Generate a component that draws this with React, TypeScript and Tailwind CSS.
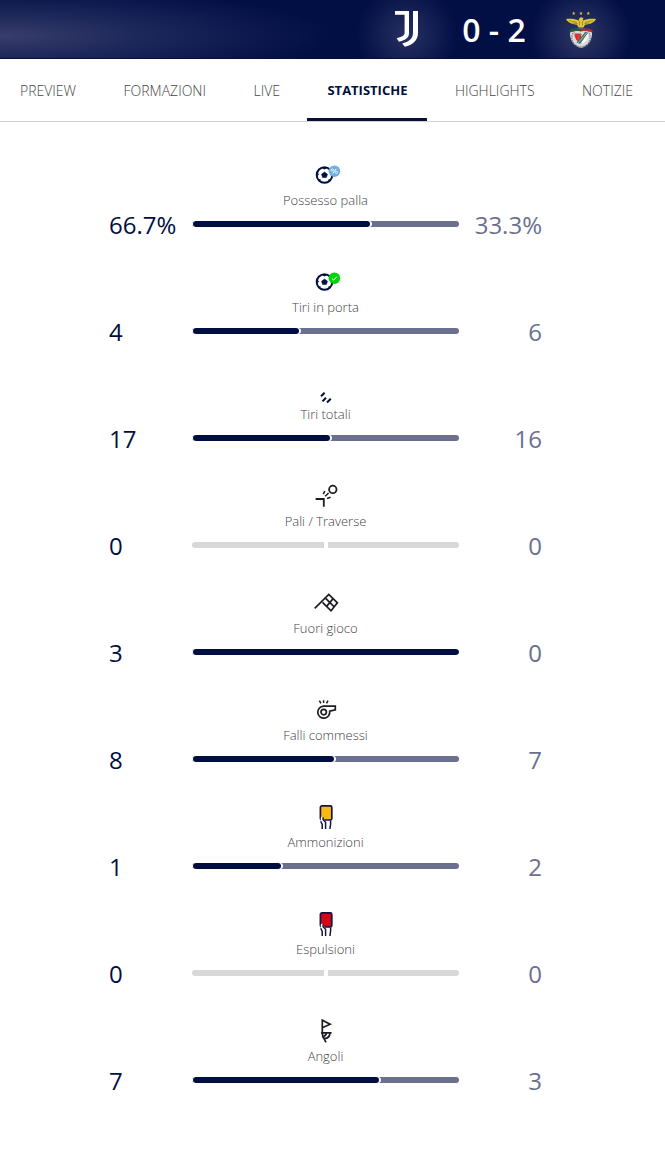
import React from "react";

const NAVY = "#000f40";
const INK = "#1c1c24";

const TABS = [
  { label: "PREVIEW", href: "#preview" },
  { label: "FORMAZIONI", href: "#formazioni" },
  { label: "LIVE", href: "#live" },
  { label: "STATISTICHE", href: "#statistiche", active: true },
  { label: "HIGHLIGHTS", href: "#highlights" },
  { label: "NOTIZIE", href: "#notizie" },
];

function Icon({ children, color = INK }: { children: React.ReactNode; color?: string }) {
  return (
    <svg
      viewBox="0 0 24 24"
      className="h-6 w-6 overflow-visible"
      fill="none"
      stroke={color}
      strokeWidth="1.7"
      aria-hidden="true"
    >
      {children}
    </svg>
  );
}

function Ball() {
  return (
    <>
      <circle cx="10.5" cy="12" r="7.8" strokeWidth="2" />
      <path d="M10.5 9l3 2.200-1.100 3.400H8.600l-1.100-3.400z" fill={NAVY} stroke={NAVY} strokeWidth=".5" />
      <path d="M8.500 4.800l2 1 2-1M3.400 12.500l1.200-1.600M5.800 17.400l.2-1.300M15.200 17.400l-.2-1.300" strokeWidth="1.100" />
    </>
  );
}

function PossessionIcon() {
  return (
    <Icon color={NAVY}>
      <Ball />
      <circle cx="20.4" cy="8.2" r="5.8" fill="#6fb0dc" stroke="none" />
      <path d="M18.700 10.600l3.400-4.800" stroke="#fff" strokeWidth="1" />
      <circle cx="18.300" cy="7" r="1.100" stroke="#fff" strokeWidth="0.8" />
      <circle cx="22.400" cy="9.400" r="1.100" stroke="#fff" strokeWidth="0.8" />
    </Icon>
  );
}

function OnTargetIcon() {
  return (
    <Icon color={NAVY}>
      <Ball />
      <circle cx="20.4" cy="8.2" r="5.8" fill="#00d20a" stroke="none" />
      <path d="M17.8 8.4l1.8 1.7 3.4-3.5" stroke="#fff" strokeWidth="1" />
    </Icon>
  );
}

function ShotsIcon() {
  return (
    <Icon color={NAVY}>
      <path d="M7 19.200l3.600-3.500M8.500 24.400l3.500-3.700M13 25.500l3.800-3.700" strokeWidth="2" />
    </Icon>
  );
}

function PostIcon() {
  return (
    <Icon>
      <circle cx="18.8" cy="5.4" r="3.700" strokeWidth="1.800" />
      <path d="M1.6 15h8.2v7.8" strokeWidth="1.800" />
      <path d="M9.300 10.200l1.500-3.200M11.200 12.300l3.400-3.300M13 14.400l3.600-1.200" strokeWidth="1.600" />
    </Icon>
  );
}

function OffsideIcon() {
  return (
    <Icon>
      <path d="M.7 17.3L14.8 3.4l8.6 8.4-6.4 8L8.500 11.300M11.700 7.300l8.500 8.500M19.100 7.600l-6.500 7.800" />
    </Icon>
  );
}

function WhistleIcon() {
  return (
    <Icon>
      <path d="M9.500 8.200h11.800v3.600l-5.600 1.400a6 6 0 1 1-6.200-5z" />
      <circle cx="9.700" cy="14.100" r="2.700" />
      <path d="M5.400 2.600l1.500 2.800M9.600 2.200v2.900M14 2.600l-1.500 2.800" strokeWidth="1.500" />
    </Icon>
  );
}

function CardIcon({ fill }: { fill: string }) {
  return (
    <Icon color="#14143c">
      <rect x="6.400" y="0.8" width="11.400" height="14.200" rx="1.600" fill={fill} />
      <path d="M8.200 24v-4.500l-1.400-3v-3.500c.2-1.600 1.900-1.600 2.300-.2l2.400 3.700V24z" fill="#fff" stroke="none" />
      <path d="M8.200 24v-4.500l-1.500-3.200M9.100 12.200v2.600l2.500 2.400V24M16.600 15.500V19l-.7 5" strokeWidth="1.500" />
    </Icon>
  );
}

function CornerIcon() {
  return (
    <Icon>
      <path d="M8.300 14V1.200l7.800 4-7.800 3.600M7 13.900h10.600M8.300 13.900c0 2.400.6 4.400 1.800 6M16 13.900c-.2 3.200-2.300 5.500-5.600 5.700M9.700 18.500l2.200 4.900M12.300 13.900c0 1.600-.9 2.700-2.500 3.200" />
    </Icon>
  );
}

type Stat = { label: string; home: number; away: number; unit?: string; icon: React.ReactNode };

const STATS: Stat[] = [
  { label: "Possesso palla", home: 66.7, away: 33.3, unit: "%", icon: <PossessionIcon /> },
  { label: "Tiri in porta", home: 4, away: 6, icon: <OnTargetIcon /> },
  { label: "Tiri totali", home: 17, away: 16, icon: <ShotsIcon /> },
  { label: "Pali / Traverse", home: 0, away: 0, icon: <PostIcon /> },
  { label: "Fuori gioco", home: 3, away: 0, icon: <OffsideIcon /> },
  { label: "Falli commessi", home: 8, away: 7, icon: <WhistleIcon /> },
  { label: "Ammonizioni", home: 1, away: 2, icon: <CardIcon fill="#fcb813" /> },
  { label: "Espulsioni", home: 0, away: 0, icon: <CardIcon fill="#dc0014" /> },
  { label: "Angoli", home: 7, away: 3, icon: <CornerIcon /> },
];

function JuventusLogo() {
  return (
    <svg viewBox="0 0 24 36" className="h-9 w-6" fill="#fff" role="img" aria-label="Juventus">
      <path d="M0 0h14v22.5c0 4.2-4.400 7-10 8.300L1.600 27.300c4.600-1 8-2.600 8-5.200V3.800H0z" />
      <path d="M18 0h5v22c0 7.600-5.600 12-13.200 13.800l-2.600-3.400C13.600 31 18 27.600 18 22z" />
    </svg>
  );
}

function BenficaLogo() {
  return (
    <svg viewBox="0 0 32 38" className="h-[38px] w-8" role="img" aria-label="Benfica">
      <g fill="#dfc93a">
        <path d="M8.700 .6l.5 1.100 1.200.1-.9.8.3 1.200-1.100-.6-1.100.6.3-1.200-.9-.8 1.200-.1z" />
        <path d="M16 .6l.5 1.100 1.200.1-.9.8.3 1.200-1.100-.6-1.100.6.3-1.200-.9-.8 1.200-.1z" />
        <path d="M23.300 .6l.5 1.100 1.200.1-.9.8.3 1.200-1.100-.6-1.100.6.3-1.200-.9-.8 1.200-.1z" />
        <path d="M1 8c5-.6 9.500 0 12.600 1.600C14 7.200 15 6 16.700 6.200l2 1.300-.9.700.3 1.400C21.500 8 26 7.400 31 8c-1 2.600-3.800 4.400-8 5.200l-3 .6-1.500 2.700h-5L12 13.800l-3-.6C5 12.400 2 10.600 1 8z" />
      </g>
      <path d="M4 9.500l8 2M28 9.500l-8 2M7.500 12l5 .6M24.500 12l-5 .6M14.500 10v4.500M17.500 10v4.500" stroke="#8c7420" strokeWidth=".7" />
      <path d="M5 20.500c-.6 8.500 3.600 14 11 16.500 7.400-2.500 11.600-8 11-16.500l-11-2z" fill="#d9dadd" />
      <circle cx="16" cy="26.700" r="9.200" fill="none" stroke="#7e828e" strokeWidth="1.600" strokeDasharray="1.200 1.100" />
      <path d="M9.500 22.500H16v9.500c-4.500-1.500-6.500-5-6.500-9.500z" fill="#e52b2c" />
      <path d="M17 22.500h6.500c0 4.500-2 8-6.500 10z" fill="#fff" />
      <path d="M11.500 31.500l9-11 2.500 1.500-8 11z" fill="#326f8e" />
      <path d="M13 32l9-10.500" stroke="#d8cb58" strokeWidth=".8" />
      <circle cx="16" cy="26.500" r="2.800" fill="none" stroke="#8f7c45" strokeWidth=".8" />
      <path d="M4 20c2-2.600 5.500-3 12-2v2.400c-4.500-.8-8-.4-11 1.200z" fill="#1d5c40" />
      <path d="M28 20c-2-2.600-5.500-3-12-2v2.400c4.500-.8 8-.4 11 1.200z" fill="#a82e38" />
    </svg>
  );
}

function StatBar({ home, away }: { home: number; away: number }) {
  const total = home + away;

  if (total === 0) {
    return (
      <div className="flex h-1.5 gap-1">
        <div className="flex-1 rounded-l-full bg-[#d8d8d8]" />
        <div className="flex-1 rounded-r-full bg-[#d8d8d8]" />
      </div>
    );
  }

  return (
    <div className="h-1.5 overflow-hidden rounded-full bg-[#6b708f]">
      <div
        className="box-content h-full rounded-r-full bg-white pr-0.5"
        style={{ width: `${(home / total) * 100}%` }}
      >
        <div className="ml-px h-full rounded-full bg-[#000f40]" />
      </div>
    </div>
  );
}

function StatRow({ label, home, away, unit = "", icon }: Stat) {
  return (
    <li className="grid grid-cols-[83px_1fr_83px] items-end">
      <span className="text-2xl leading-8 text-[#000f40]">{home}{unit}</span>
      <div className="pb-[14px]">
        <div className="flex justify-center">{icon}</div>
        <p className="mt-[5px] mb-[13px] text-center text-[13px] leading-4 font-light text-[#444]">{label}</p>
        <StatBar home={home} away={away} />
      </div>
      <span className="text-right text-2xl leading-8 text-[#6b708f]">{away}{unit}</span>
    </li>
  );
}

export default function App() {
  return (
    <div className="min-h-screen bg-white font-['Open_Sans',sans-serif]">
      {/* Scoreboard */}
      <header className="flex h-[59px] justify-end border-b border-[#0a1035] bg-[#020f45] bg-[radial-gradient(ellipse_330px_50px_at_0px_36px,#393e6b_0%,#1b2659_45%,transparent_100%)] pr-8">
        <div className="flex">
          <div className="flex w-[104px] justify-center bg-[radial-gradient(circle_at_50%_60%,#273061_0%,transparent_50px)] pt-[11px]">
            <JuventusLogo />
          </div>
          <p className="w-[70px] pt-3 text-center text-[32px] leading-9 font-semibold whitespace-nowrap text-white">0 - 2</p>
          <div className="flex w-[104px] justify-center bg-[radial-gradient(circle_at_50%_60%,#303866_0%,transparent_50px)] pt-[11px]">
            <BenficaLogo />
          </div>
        </div>
      </header>

      {/* Tabs */}
      <nav className="flex h-[63px] justify-between border-b border-[#d2d2d6] pr-3">
        {TABS.map((tab) => (
          <a
            key={tab.label}
            href={tab.href}
            aria-current={tab.active ? "page" : undefined}
            className={`flex items-center border-b-[3px] px-5 pt-1 ${
              tab.active
                ? "border-[#0a1035] text-[13px] font-bold text-[#000f40]"
                : "border-transparent text-sm font-light text-[#444]"
            }`}
          >
            {tab.label}
          </a>
        ))}
      </nav>

      {/* Match stats */}
      <main className="pt-[41px] pr-[14px] pb-14">
        <ul className="mx-auto flex max-w-[433px] flex-col gap-[29px]">
          {STATS.map((stat) => (
            <StatRow key={stat.label} {...stat} />
          ))}
        </ul>
      </main>
    </div>
  );
}
